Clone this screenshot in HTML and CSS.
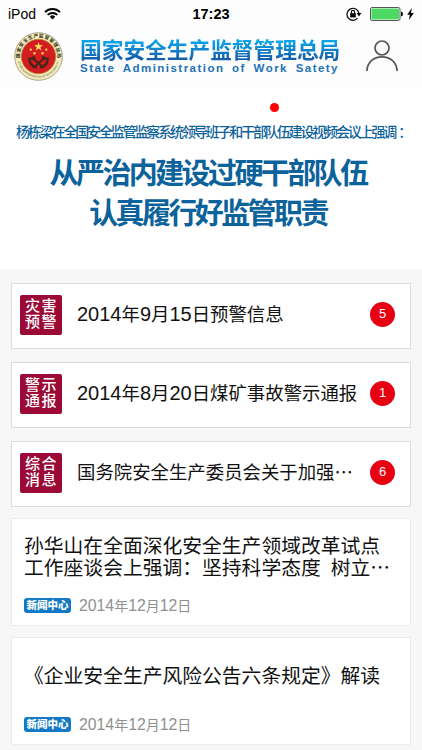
FILE: index.html
```html
<!DOCTYPE html>
<html lang="zh-CN">
<head>
  <meta charset="UTF-8">
  <meta name="viewport" content="width=device-width, initial-scale=1.0">
  <title>国家安全生产监督管理总局</title>
  <link rel="stylesheet" href="styles.css">
</head>
<body>
  <div class="status-bar">
    <div class="status-left">
      <span>iPod</span>
      <svg class="wifi" width="17" height="13" viewBox="0 0 17 13" fill="none" stroke="#000" stroke-width="2">
        <path d="M1 5.1a10.6 10.6 0 0 1 15 0"/>
        <path d="M3.7 7.9a6.8 6.8 0 0 1 9.6 0"/>
        <path d="M8.5 12.4L5.8 9.7a3.8 3.8 0 0 1 5.4 0z" fill="#000" stroke="none"/>
      </svg>
    </div>
    <div class="status-time">17:23</div>
    <div class="status-right">
      <svg width="16" height="14" viewBox="0 0 16 14">
        <path d="M11.6 11.2A6 6 0 1 1 12.9 6" fill="none" stroke="#000" stroke-width="1.2"/>
        <path d="M10.6 6h4.8L13 9.4z"/>
        <rect x="4.2" y="6.2" width="5.6" height="4.2"/>
        <path d="M5.4 6.4V5a1.6 1.6 0 0 1 3.2 0v1.4" fill="none" stroke="#000" stroke-width="1.1"/>
      </svg>
      <svg width="33" height="14" viewBox="0 0 33 14">
        <rect x=".5" y=".5" width="29.5" height="13" rx="1.6" fill="#fff" stroke="#555"/>
        <rect x="1.5" y="1.5" width="27.5" height="11" rx=".8" fill="#4cd964"/>
        <path d="M31 4.5q2 .4 2 2.5t-2 2.5z"/>
      </svg>
      <svg width="7" height="12" viewBox="0 0 7 12"><path d="M4.8 0L.2 6.7h2.6L1.9 12l4.9-7H4z"/></svg>
    </div>
  </div>

  <div class="header">
    <svg class="emblem" width="49" height="49" viewBox="0 0 49 49">
      <defs>
        <path id="ring-top" d="M6.2 28a18.7 18.7 0 1 1 36.6 0"/>
        <path id="ring-bottom" d="M3.5 28a21.3 21.3 0 0 0 42 0"/>
      </defs>
      <circle cx="24.5" cy="24.5" r="23.8" fill="#f4edba" stroke="#aaa48b" stroke-width="1"/>
      <circle cx="24.5" cy="24.5" r="17.2" fill="#d31d20" stroke="#b98534" stroke-width=".8"/>
      <text class="ring-cn"><textPath href="#ring-top" startOffset="50%" text-anchor="middle" textLength="62">国家安全生产监督管理总局</textPath></text>
      <text class="ring-en"><textPath href="#ring-bottom" startOffset="50%" text-anchor="middle" textLength="56">STATE ADMINISTRATION OF WORK SAFETY</textPath></text>
      <path fill="#ffe35a" d="M24.5 10l1.1 3.2H29l-2.7 2 1 3.3-2.8-2-2.8 2 1-3.3-2.7-2h3.4z"/>
      <g fill="#ffd750">
        <circle cx="16.8" cy="17.6" r="1.2"/>
        <circle cx="20.5" cy="21.3" r="1.2"/>
        <circle cx="28.5" cy="21.3" r="1.2"/>
        <circle cx="32.2" cy="17.6" r="1.2"/>
      </g>
      <g fill="none" stroke="#4a2419" stroke-width="2.6">
        <path d="M15.500 25.500q-1 8 7.500 10M33.500 25.500q1 8-7.500 10"/>
        <path d="M19 26.500l11 9.500M30 26.500L19 36" stroke-width="2"/>
        <path d="M17 27l4-2M28 25l4 2" stroke-width="3"/>
      </g>
    </svg>
    <div class="brand">
      <div class="brand-cn">国家安全生产监督管理总局</div>
      <div class="brand-en">State Administration of Work Satety</div>
    </div>
    <svg class="user" width="34" height="34" viewBox="0 0 34 34" fill="none" stroke="#555" stroke-width="1.7">
      <circle cx="17" cy="9" r="7"/>
      <path d="M1.900 32c.5-8.500 6.500-14.200 15.100-14.200S31.600 23.500 32.100 32"/>
    </svg>
  </div>

  <div class="banner">
    <span class="dot"></span>
    <div class="banner-sub">杨栋梁在全国安全监管监察系统领导班子和干部队伍建设视频会议上强调<span class="colon">：</span></div>
    <div class="banner-title">从严治内建设过硬干部队伍<br>认真履行好监管职责</div>
  </div>

  <div class="list">
    <div class="alert">
      <div class="tag">灾害<br>预警</div>
      <div class="alert-title"><span class="num">2014</span>年<span class="num">9</span>月<span class="num">15</span>日预警信息</div>
      <div class="count">5</div>
    </div>
    <div class="alert">
      <div class="tag">警示<br>通报</div>
      <div class="alert-title"><span class="num">2014</span>年<span class="num">8</span>月<span class="num">20</span>日煤矿事故警示通报</div>
      <div class="count">1</div>
    </div>
    <div class="alert">
      <div class="tag">综合<br>消息</div>
      <div class="alert-title">国务院安全生产委员会关于加强⋯</div>
      <div class="count">6</div>
    </div>

    <div class="news">
      <div class="news-title">孙华山在全面深化安全生产领域改革试点<br>工作座谈会上强调：坚持科学态度<span class="gap"></span>树立⋯</div>
      <div class="news-meta">
        <span class="source">新闻中心</span>
        <span class="date"><span class="date-num">2014</span>年<span class="date-num">12</span>月<span class="date-num">12</span>日</span>
      </div>
    </div>
    <div class="news">
      <div class="news-title">《企业安全生产风险公告六条规定》解读</div>
      <div class="news-meta">
        <span class="source">新闻中心</span>
        <span class="date"><span class="date-num">2014</span>年<span class="date-num">12</span>月<span class="date-num">12</span>日</span>
      </div>
    </div>
  </div>
</body>
</html>
```
FILE: styles.css
```css
* {
  box-sizing: border-box;
}
body {
  margin: 0;
  height: 750px;
  overflow: hidden;
  background-color: #f7f7f7;
  color: #111;
  font-family: "Liberation Sans", "Noto Sans CJK SC", sans-serif;
}
svg {
  display: block;
  flex: none;
}

/* status bar */
.status-bar {
  display: grid;
  grid-template-columns: 1fr auto 1fr;
  align-items: center;
  height: 28px;
  padding: 0 8px;
  background-color: #fdfdfd;
  color: #000;
  font-size: 14px;
}
.status-left {
  display: flex;
  gap: 8px;
  align-items: center;
}
.wifi {
  margin-top: -2px;
}
.status-time {
  font-weight: bold;
  font-size: 14.5px;
}
.status-right {
  display: flex;
  align-items: center;
  justify-content: flex-end;
  gap: 4px;
}
.status-right svg:first-child {
  margin-right: 4px;
}

/* header */
.header {
  display: flex;
  height: 60px;
  padding: 4px 0 0 14px;
  background-color: #fdfdfd;
}
.ring-cn {
  font-size: 4.8px;
  font-weight: bold;
  fill: #39352a;
}
.ring-en {
  font-size: 3px;
  fill: #6a644c;
}
.brand {
  width: 262px;
  margin: 6px 24px 0 17px;
}
.brand-cn {
  height: 24px;
  font-size: 21.7px;
  line-height: 26px;
  font-weight: bold;
  white-space: nowrap;
  color: transparent;
  background: linear-gradient(#0ba3e8 15%, #1560ad 85%);
  -webkit-background-clip: text;
  background-clip: text;
}
.brand-en {
  font-size: 11.5px;
  line-height: 13px;
  font-weight: bold;
  letter-spacing: 1.47px;
  word-spacing: 3px;
  white-space: nowrap;
  color: #2372b6;
}
.user {
  margin-top: 7px;
  margin-left: -1px;
}

/* banner */
.banner {
  position: relative;
  height: 181px;
  padding-top: 34px;
  background-color: #fff;
  color: #0c629b;
}
.dot {
  position: absolute;
  top: 15px;
  left: 270px;
  width: 9px;
  height: 9px;
  border-radius: 50%;
  background-color: #f00;
}
.banner-sub {
  padding-left: 16px;
  font-size: 14px;
  line-height: 20px;
  font-weight: 500;
  letter-spacing: -2.15px;
  white-space: nowrap;
}
.colon {
  margin-left: 3px;
}
.banner-title {
  padding: 13px 6px 0 0;
  font-size: 29px;
  line-height: 39.5px;
  font-weight: bold;
  letter-spacing: -2.6px;
  text-align: center;
}

/* list */
.list {
  padding: 14px 11px 0;
}
.alert {
  display: flex;
  align-items: center;
  height: 66px;
  margin-bottom: 13px;
  padding: 0 15px 3px 8px;
  border: 1px solid #dcdcdc;
  background-color: #fff;
}
.alert:nth-child(3) {
  margin-bottom: 11px;
}
.tag {
  width: 42px;
  height: 40px;
  padding: 3px 0 0 1px;
  border-radius: 2px;
  background-color: #9b0a36;
  color: #fff;
  font-size: 15px;
  line-height: 16.5px;
  font-weight: 500;
  letter-spacing: 1.5px;
  text-align: center;
}
.alert-title {
  flex: 1;
  padding-left: 15px;
  font-size: 18.4px;
  line-height: 26px;
  white-space: nowrap;
}
.num {
  font-size: 20px;
}
.count {
  width: 25px;
  height: 25px;
  border-radius: 50%;
  background-color: #e60012;
  color: #fff;
  font-size: 13px;
  line-height: 24px;
  text-align: center;
}
.news {
  display: flex;
  flex-direction: column;
  height: 108px;
  margin-bottom: 11px;
  padding: 0 0 9px 12px;
  border: 1px solid #ececec;
  background-color: #fff;
}
.news-title {
  margin: auto 0;
  font-size: 19.8px;
  line-height: 22.5px;
  white-space: nowrap;
}
.gap {
  display: inline-block;
  width: 10px;
}
.news-meta {
  display: flex;
  align-items: center;
  gap: 8px;
  height: 21px;
}
.source {
  width: 47px;
  height: 15px;
  border-radius: 3px;
  background-color: #1379c4;
  color: #fff;
  font-size: 10.5px;
  line-height: 15px;
  font-weight: 900;
  text-align: center;
}
.date {
  color: #909090;
  font-size: 14px;
  line-height: 20px;
}
.date-num {
  font-size: 15.8px;
}
```
